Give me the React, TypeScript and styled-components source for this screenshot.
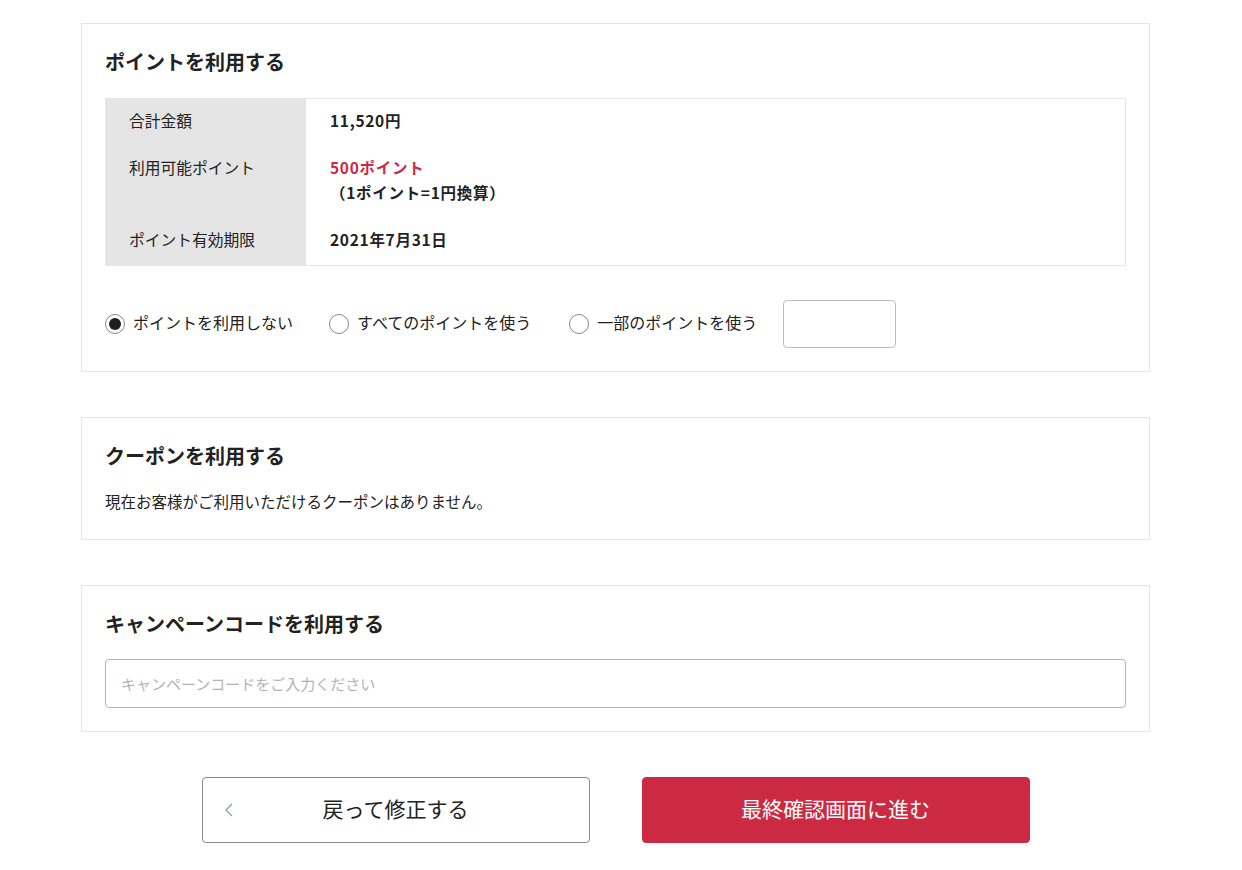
import React, { useState } from "react";
import styled, { createGlobalStyle } from "styled-components";

const GlobalStyle = createGlobalStyle`
  html, body {
    margin: 0;
    padding: 0;
    background: #fff;
  }
  body {
    font-family: "Noto Sans CJK JP", "Noto Sans", sans-serif;
    color: #222;
  }
`;

const Page = styled.div`
  width: 1069px;
  margin-left: 81px;
  padding: 23px 0 27px;
  display: flex;
  flex-direction: column;
  gap: 45px;
`;

const Section = styled.section`
  border: 1px solid #e6e6e6;
  padding: 23px;
`;

const Heading = styled.h2<{ gap: number }>`
  margin: 0 0 ${(p) => p.gap}px;
  font-size: 20px;
  font-weight: 700;
  line-height: 30px;
`;

const InfoTable = styled.div`
  display: grid;
  grid-template-columns: 201px 1fr;
  border: 1px solid #e6e6e6;
  border-left: none;
`;

const LabelCell = styled.div`
  background: #e5e5e5;
  padding: 9px 24px 13px;
  font-size: 15.75px;
  line-height: 25px;
`;

const ValueCell = styled.div`
  padding: 9px 24px 13px;
  font-size: 15.5px;
  line-height: 25px;
  font-weight: 700;
  letter-spacing: 0.7px;
  color: #222;

  em {
    font-style: normal;
    color: #cc2a42;
    display: block;
  }
`;

const RadioRow = styled.div`
  display: flex;
  align-items: center;
  margin-top: 34px;
`;

const RadioLabel = styled.label<{ space: number }>`
  display: flex;
  align-items: center;
  gap: 8px;
  margin-right: ${(p) => p.space}px;
  font-size: 16px;
  cursor: pointer;

  span:last-child {
    padding-bottom: 4px;
  }
`;

const RadioCircle = styled.span<{ checked: boolean }>`
  width: 20px;
  height: 20px;
  box-sizing: border-box;
  border: 1px solid #888;
  border-radius: 50%;
  display: flex;
  align-items: center;
  justify-content: center;

  &::after {
    content: "";
    width: 12px;
    height: 12px;
    border-radius: 50%;
    background: ${(p) => (p.checked ? "#1e1e1e" : "transparent")};
  }
`;

const SmallInput = styled.input`
  width: 113px;
  height: 48px;
  box-sizing: border-box;
  border: 1px solid #bdbdbd;
  border-radius: 4px;
  outline: none;
  font-size: 15px;
  padding: 0 10px;
`;

const Note = styled.p`
  margin: 0;
  font-size: 15.5px;
  line-height: 26px;
  padding-bottom: 2px;
`;

const WideInput = styled.input`
  width: 100%;
  height: 49px;
  box-sizing: border-box;
  border: 1px solid #b5b5b5;
  border-radius: 4px;
  outline: none;
  padding: 0 15px;
  font-family: inherit;
  font-size: 15px;
  color: #222;

  &::placeholder {
    color: #b3b3b3;
  }
`;

const Buttons = styled.div`
  display: flex;
  justify-content: center;
  gap: 52px;
`;

const Button = styled.button<{ primary?: boolean }>`
  position: relative;
  width: 388px;
  height: 66px;
  box-sizing: border-box;
  padding: 0 0 5px;
  border-radius: 4px;
  font-family: inherit;
  font-size: 21px;
  cursor: pointer;
  border: 1px solid ${(p) => (p.primary ? "#cc2a42" : "#8a8a8a")};
  background: ${(p) => (p.primary ? "#cc2a42" : "#fff")};
  color: ${(p) => (p.primary ? "#fff" : "#222")};
`;

const Chevron = styled.svg`
  position: absolute;
  left: 22px;
  top: 50%;
  transform: translateY(-50%);
`;

const options = [
  { label: "ポイントを利用しない", space: 36 },
  { label: "すべてのポイントを使う", space: 38 },
  { label: "一部のポイントを使う", space: 26 },
];

export default function App() {
  const [selected, setSelected] = useState(0);

  return (
    <>
      <GlobalStyle />
      <Page>
        <Section>
          <Heading gap={21}>ポイントを利用する</Heading>
          <InfoTable>
            <LabelCell>合計金額</LabelCell>
            <ValueCell>11,520円</ValueCell>
            <LabelCell>利用可能ポイント</LabelCell>
            <ValueCell>
              <em>500ポイント</em>
              （1ポイント=1円換算）
            </ValueCell>
            <LabelCell>ポイント有効期限</LabelCell>
            <ValueCell>2021年7月31日</ValueCell>
          </InfoTable>
          <RadioRow>
            {options.map((o, i) => (
              <RadioLabel key={o.label} space={o.space} onClick={() => setSelected(i)}>
                <RadioCircle checked={selected === i} />
                <span>{o.label}</span>
              </RadioLabel>
            ))}
            <SmallInput type="text" />
          </RadioRow>
        </Section>

        <Section>
          <Heading gap={17}>クーポンを利用する</Heading>
          <Note>現在お客様がご利用いただけるクーポンはありません。</Note>
        </Section>

        <Section>
          <Heading gap={20}>キャンペーンコードを利用する</Heading>
          <WideInput type="text" placeholder="キャンペーンコードをご入力ください" />
        </Section>

        <Buttons>
          <Button>
            <Chevron width="8" height="14" viewBox="0 0 8 14">
              <path d="M7 1 L1 7 L7 13" fill="none" stroke="#8a9a94" strokeWidth="1.2" />
            </Chevron>
            戻って修正する
          </Button>
          <Button primary>最終確認画面に進む</Button>
        </Buttons>
      </Page>
    </>
  );
}
